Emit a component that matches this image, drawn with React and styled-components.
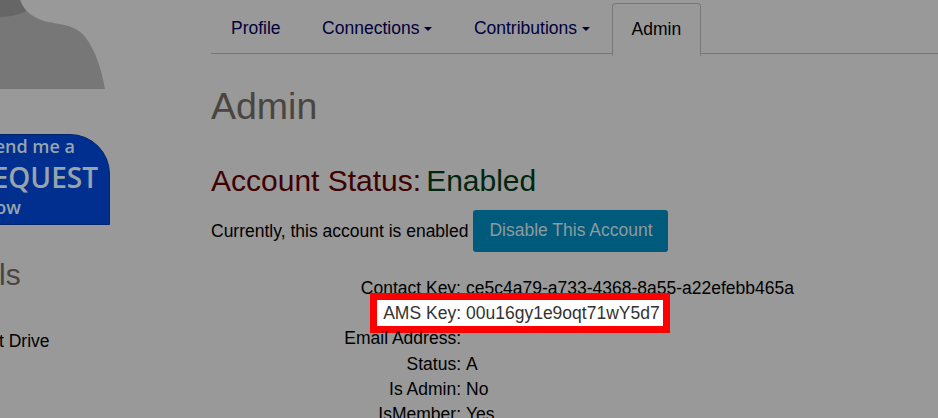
import React from 'react';
import styled, { createGlobalStyle } from 'styled-components';

const GlobalStyle = createGlobalStyle`
  html, body {
    margin: 0;
    height: 100%;
    overflow: hidden;
    background: #999;
  }
  body {
    font-family: "Liberation Sans", Arial, sans-serif;
    font-size: 17.5px;
    color: #000;
  }
`;

const tabs = [
  { label: 'Profile' },
  { label: 'Connections', caret: true },
  { label: 'Contributions', caret: true },
  { label: 'Admin', active: true },
];

const details = [
  { label: 'Contact Key:', value: 'ce5c4a79-a733-4368-8a55-a22efebb465a' },
  { label: 'AMS Key:', value: '00u16gy1e9oqt71wY5d7', marked: true },
  { label: 'Email Address:', value: '' },
  { label: 'Status:', value: 'A' },
  { label: 'Is Admin:', value: 'No' },
  { label: 'IsMember:', value: 'Yes' },
];

function App() {
  return (
    <Page>
      <GlobalStyle />
      <Sidebar>
        <Avatar viewBox="0 0 105 89" aria-hidden="true">
          <path d="M0 0H20C23 9 31 17 44 21C60 25 76 24 86 38C96 52 101 68 105 89H0Z" fill="#777" />
          <path d="M0 0H20C22 5 24 8 26 11C18 15 8 17 0 17Z" fill="#666" />
        </Avatar>
        <RequestBadge>
          <BadgeSmall>Send me a</BadgeSmall>
          <BadgeBig>REQUEST</BadgeBig>
          <BadgeSmall>now</BadgeSmall>
        </RequestBadge>
        <SideTitle>Details</SideTitle>
        <SideText>123 Test Drive</SideText>
      </Sidebar>
      <Main>
        <Tabs>
          {tabs.map((tab) => (
            <Tab key={tab.label} $active={tab.active}>
              {tab.label}
              {tab.caret && <Caret />}
            </Tab>
          ))}
        </Tabs>
        <Title>Admin</Title>
        <Status>
          <StatusLabel>Account Status:</StatusLabel>
          <StatusValue>Enabled</StatusValue>
        </Status>
        <Current>
          Currently, this account is enabled
          <DisableButton>Disable This Account</DisableButton>
        </Current>
        <Details>
          {details.map((row) => (
            <Row key={row.label}>
              {row.marked && <Highlight />}
              <Label $marked={row.marked}>{row.label}</Label>
              <Value $marked={row.marked}>{row.value}</Value>
            </Row>
          ))}
        </Details>
      </Main>
    </Page>
  );
}

const Page = styled.div`
  display: flex;
  width: 938px;
  height: 418px;
  overflow: hidden;
`;

const Sidebar = styled.aside`
  display: flex;
  flex-direction: column;
  align-items: flex-end;
  flex: 0 0 211px;
  width: 211px;
  padding-right: 101px;
  box-sizing: border-box;
  overflow: hidden;
`;

const Avatar = styled.svg`
  display: block;
  flex: none;
  width: 105px;
  height: 89px;
  margin-right: 5px;
`;

const RequestBadge = styled.div`
  flex: none;
  align-self: flex-end;
  width: 210px;
  height: 91px;
  margin-top: 45px;
  padding-right: 11px;
  box-sizing: border-box;
  background: #002f90;
  border: 1px solid #00266f;
  border-top-right-radius: 40px;
  color: #98a4ab;
  font-family: "Open Sans", sans-serif;
  font-weight: 600;
  text-align: right;
  white-space: nowrap;
`;

const BadgeSmall = styled.div`
  font-size: 18px;
  line-height: 22px;
  padding-right: 23px;
  &:first-child { margin-top: 0; }
  &:last-child { padding-right: 0; margin-right: 77px; }
`;

const BadgeBig = styled.div`
  font-size: 28px;
  line-height: 38px;
  margin-top: 1px;
`;

const SideTitle = styled.h3`
  align-self: flex-start;
  margin: 30px 0 0 -71px;
  font-size: 30px;
  font-weight: 400;
  line-height: 40px;
  color: #4a453f;
  white-space: nowrap;
`;

const SideText = styled.div`
  align-self: flex-start;
  margin: 36px 0 0 -62px;
  line-height: 20px;
  white-space: nowrap;
`;

const Main = styled.main`
  flex: 1;
  min-width: 0;
`;

const Tabs = styled.nav`
  display: flex;
  gap: 1.5px;
  height: 54px;
  padding-top: 3px;
  box-sizing: border-box;
  border-bottom: 1px solid #777;
`;

const Tab = styled.a`
  display: flex;
  align-items: center;
  height: 51px;
  padding: 0 20px;
  box-sizing: content-box;
  color: ${(p) => (p.$active ? '#000' : '#00003d')};
  ${(p) => p.$active && `
    padding: 0 19px;
    background: #999;
    border: 1px solid #777;
    border-bottom-color: #999;
    border-radius: 4px 4px 0 0;
  `}
`;

const Caret = styled.span`
  width: 0;
  height: 0;
  margin-left: 5px;
  border-top: 4.5px solid #00003d;
  border-left: 4px solid transparent;
  border-right: 4.5px solid transparent;
`;

const Title = styled.h1`
  margin: 28px 0 0;
  font-size: 37.5px;
  font-weight: 400;
  line-height: 48px;
  color: #4a453f;
`;

const Status = styled.div`
  display: flex;
  gap: 5px;
  margin-top: 31px;
  font-size: 30px;
  line-height: 40px;
`;

const StatusLabel = styled.span`
  color: #3f0000;
`;

const StatusValue = styled.span`
  color: #00260f;
`;

const Current = styled.div`
  display: flex;
  align-items: center;
  gap: 5px;
  margin-top: 9px;
`;

const DisableButton = styled.button`
  height: 42px;
  padding: 0 15px 2px 16px;
  border: 0;
  border-radius: 3px;
  background: #005a7b;
  color: #8f9a9f;
  font: inherit;
`;

const Details = styled.div`
  margin-top: 24px;
`;

const Row = styled.div`
  display: flex;
  position: relative;
  gap: 5px;
  height: 25.2px;
  line-height: 25.2px;
`;

const Highlight = styled.div`
  position: absolute;
  left: 159px;
  top: -8px;
  width: 300px;
  height: 40px;
  box-sizing: border-box;
  border: 7px solid #ff0000;
  background: #fff;
`;

const Label = styled.div`
  position: relative;
  width: 250px;
  text-align: right;
  color: ${(p) => (p.$marked ? '#333' : '#000')};
`;

const Value = styled.div`
  position: relative;
  color: ${(p) => (p.$marked ? '#333' : '#000')};
`;

export default App;
